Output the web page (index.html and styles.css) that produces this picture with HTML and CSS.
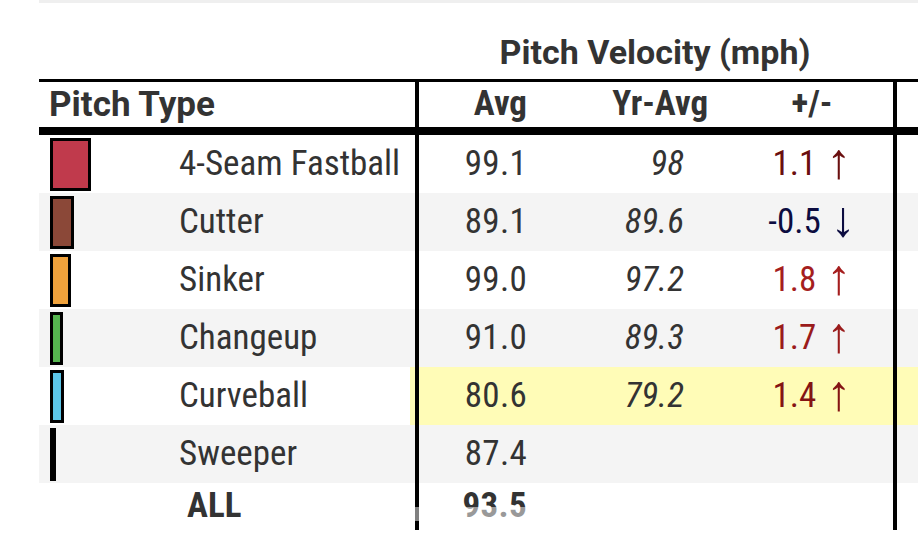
FILE: index.html
```html
<!DOCTYPE html>
<html lang="en">
<head>
<meta charset="utf-8">
<title>Pitch Velocity</title>
<link rel="stylesheet" href="styles.css">
</head>
<body>
<div class="frame">
  <table class="gt">
    <colgroup>
      <col class="col-name">
      <col class="col-avg">
      <col class="col-yr">
      <col class="col-diff">
      <col class="col-extra">
    </colgroup>
    <thead>
      <tr class="spanner">
        <th class="blank"></th>
        <th class="span-title" colspan="3">Pitch Velocity (mph)</th>
        <th class="blank"></th>
      </tr>
      <tr class="colhead">
        <th class="h-name">Pitch Type</th>
        <th class="h-avg vline">Avg</th>
        <th class="h-yr">Yr-Avg</th>
        <th class="h-diff">+/-</th>
        <th class="h-extra vline"></th>
      </tr>
    </thead>
    <tbody>
      <tr>
        <td class="c-name"><div class="pitch"><span class="chipbox"><span class="chip" style="width:41px;background:#c03a4c"></span></span><span class="pname">4-Seam Fastball</span></div></td>
        <td class="c-avg vline">99.1</td>
        <td class="c-yr">98</td>
        <td class="c-diff"><span style="color:#6a0f0f">1.1 <span class="arr">↑</span></span></td>
        <td class="c-extra vline"></td>
      </tr>
      <tr class="stripe">
        <td class="c-name"><div class="pitch"><span class="chipbox"><span class="chip" style="width:24px;background:#8b4838"></span></span><span class="pname">Cutter</span></div></td>
        <td class="c-avg vline">89.1</td>
        <td class="c-yr">89.6</td>
        <td class="c-diff"><span style="color:#0c0c40">-0.5 <span class="arr">↓</span></span></td>
        <td class="c-extra vline"></td>
      </tr>
      <tr>
        <td class="c-name"><div class="pitch"><span class="chipbox"><span class="chip" style="width:21px;background:#f0a23c"></span></span><span class="pname">Sinker</span></div></td>
        <td class="c-avg vline">99.0</td>
        <td class="c-yr">97.2</td>
        <td class="c-diff"><span style="color:#a51e1e">1.8 <span class="arr">↑</span></span></td>
        <td class="c-extra vline"></td>
      </tr>
      <tr class="stripe">
        <td class="c-name"><div class="pitch"><span class="chipbox"><span class="chip" style="width:13px;background:#55b54f"></span></span><span class="pname">Changeup</span></div></td>
        <td class="c-avg vline">91.0</td>
        <td class="c-yr">89.3</td>
        <td class="c-diff"><span style="color:#9a1b1b">1.7 <span class="arr">↑</span></span></td>
        <td class="c-extra vline"></td>
      </tr>
      <tr class="highlight">
        <td class="c-name"><div class="pitch"><span class="chipbox"><span class="chip" style="width:14px;background:#5cc6e8"></span></span><span class="pname">Curveball</span></div></td>
        <td class="c-avg vline">80.6</td>
        <td class="c-yr">79.2</td>
        <td class="c-diff"><span style="color:#841414">1.4 <span class="arr">↑</span></span></td>
        <td class="c-extra vline"></td>
      </tr>
      <tr class="stripe">
        <td class="c-name"><div class="pitch"><span class="chipbox"><span class="chip" style="width:6px;background:#000"></span></span><span class="pname">Sweeper</span></div></td>
        <td class="c-avg vline">87.4</td>
        <td class="c-yr"></td>
        <td class="c-diff"></td>
        <td class="c-extra vline"></td>
      </tr>
      <tr class="total">
        <td class="c-name"><div class="pitch"><span class="chipbox"></span><span class="pname all">ALL</span></div></td>
        <td class="c-avg vline">93.5</td>
        <td class="c-yr"></td>
        <td class="c-diff"></td>
        <td class="c-extra vline"></td>
      </tr>
    </tbody>
  </table>
  <div class="fade"></div>
</div>
</body>
</html>
```

FILE: styles.css
```css
html, body {
  margin: 0;
  padding: 0;
  background: #fff;
  overflow: hidden;
}

body {
  width: 918px;
  height: 537px;
  font-family: "Roboto Condensed", Roboto, "Liberation Sans", sans-serif;
  color: #333;
}

.frame {
  position: relative;
  margin-left: 39px;
  width: 879px;
  height: 530px;
  overflow: hidden;
  border-top: 3px solid #efefef;
  box-sizing: border-box;
}

.gt {
  table-layout: fixed;
  border-collapse: separate;
  border-spacing: 0;
  width: 984px;
  font-size: 35px;
}

.col-name { width: 376px; }
.col-avg { width: 150px; }
.col-yr { width: 180px; }
.col-diff { width: 148px; }
.col-extra { width: 130px; }

th, td {
  box-sizing: border-box;
  padding: 0;
  font-weight: normal;
  white-space: nowrap;
}

.vline { border-left: 4px solid #000; }

/* spanner row */
.spanner th {
  height: 79px;
  border-bottom: 3px solid #000;
  vertical-align: bottom;
  padding-bottom: 6px;
  line-height: 41px;
}
.span-title {
  font-family: Roboto, "Liberation Sans", sans-serif;
  font-weight: 700;
  font-size: 34px;
  text-align: center;
  padding-left: 2px;
}

/* column heads */
.colhead th {
  height: 52px;
  line-height: 44px;
  border-bottom: 8px solid #000;
  font-weight: 700;
  vertical-align: top;
}
.h-name {
  font-family: Roboto, "Liberation Sans", sans-serif;
  text-align: left;
  padding-left: 10px;
  padding-top: 1px;
}
.h-avg { text-align: right; padding-right: 38px; }
.h-yr { text-align: right; padding-right: 37px; }
.h-diff { text-align: center; padding-right: 14px; }

/* body */
tbody td {
  height: 58px;
  line-height: 58px;
  vertical-align: middle;
}
.c-avg { text-align: right; padding-right: 38px; letter-spacing: 0.3px; }
.c-yr { text-align: right; padding-right: 61px; font-style: italic; }
.c-diff { text-align: center; padding-right: 14px; }

.arr {
  font-size: 50px;
  font-weight: 300;
  line-height: 0;
  vertical-align: -3px;
  margin-left: 2px;
}

.stripe td { background: #f4f4f4; }

.highlight td { background: #fffcb7; }
.highlight .c-name {
  background: linear-gradient(to right, #fff calc(100% - 5px), #fffcb7 0);
}

.pitch {
  display: flex;
  align-items: center;
  height: 58px;
}
.chipbox {
  display: flex;
  align-items: center;
  width: 140px;
  padding-left: 11px;
  box-sizing: border-box;
  height: 58px;
}
.chip {
  display: block;
  height: 53px;
  border: 3px solid #000;
  box-sizing: border-box;
}

.total td {
  height: 48px;
  line-height: 46px;
  vertical-align: top;
  font-weight: 700;
}
.total .pitch { height: 46px; }
.total .chipbox { height: 46px; }
.pname.all { margin-left: 8px; }

/* faded strip over the bottom edge of the capture */
.fade {
  position: absolute;
  left: 374px;
  top: 504px;
  width: 122px;
  height: 14px;
  background: rgba(255, 255, 255, 0.5);
}
```
